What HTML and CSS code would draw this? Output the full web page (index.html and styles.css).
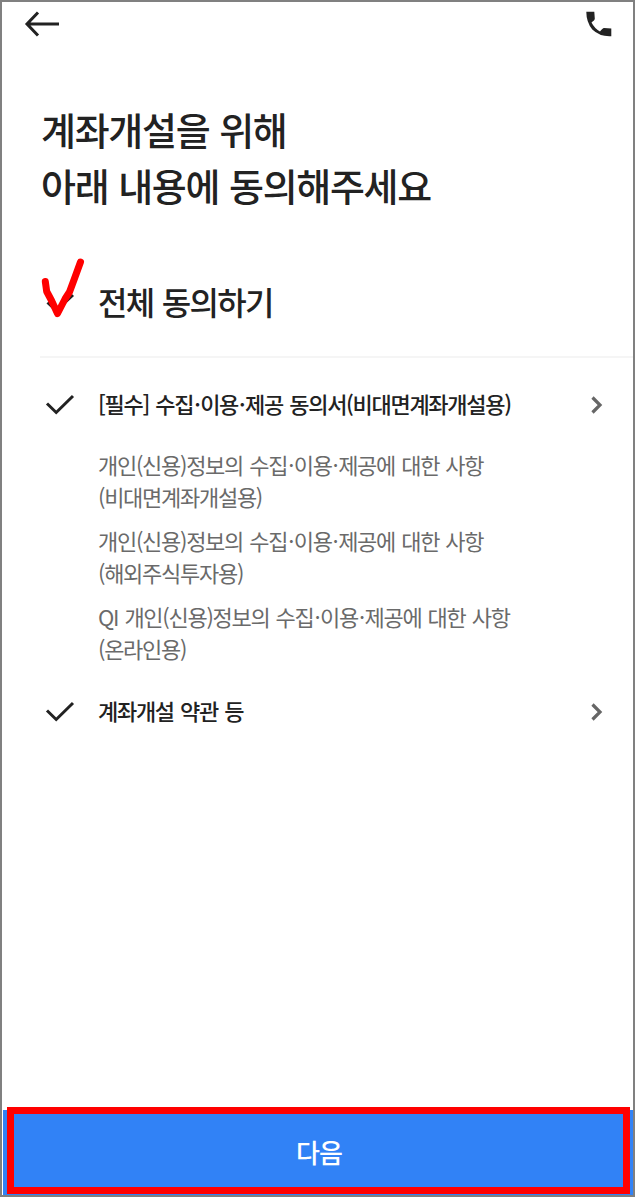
FILE: index.html
```html
<!DOCTYPE html>
<html lang="ko">
<head>
<meta charset="utf-8">
<title>계좌개설 동의</title>
<link rel="stylesheet" href="styles.css">
</head>
<body>
<div class="screen">
  <header class="topbar">
    <svg class="back" width="36" height="28" viewBox="0 0 36 28"><path d="M14 2.500 3 14l11 11.500M3 14H35" fill="none" stroke="#222" stroke-width="3"/></svg>
    <svg class="phone" width="26" height="26" viewBox="0 0 26 26"><path d="M0.300 0.700H8.300L8.800 7.800Q8.800 9.200 5.500 11.500Q8.600 17.500 14 20.500Q16.600 17 18 17L25.300 17.500V25.300Q14 26 6.300 18.600Q0.300 11 0.300 0.700Z" fill="#222"/></svg>
  </header>
  <main class="content">
    <h1 class="title">계좌개설을 위해<br>아래 내용에 동의해주세요</h1>
    <div class="all">
      <span class="all-mark">
        <svg class="check" width="30" height="22" viewBox="0 0 30 22"><path d="M2.500 12.500 11.200 20.500 28 5" fill="none" stroke="#222" stroke-width="3"/></svg>
        <svg class="pen" width="48" height="64" viewBox="0 0 48 64"><path d="M6.300 24.500 7.700 34.500 12.500 43.500 18.500 56.500 26 42 30.500 35 35.500 21.500 41.500 5" fill="none" stroke="#f00" stroke-width="7" stroke-linecap="round" stroke-linejoin="round"/></svg>
      </span>
      <span class="all-label">전체 동의하기</span>
    </div>
    <div class="row">
      <svg class="check" width="30" height="22" viewBox="0 0 30 22"><path d="M2 9.500 11.200 18.500 28 2" fill="none" stroke="#222" stroke-width="3"/></svg>
      <span class="row-label">[필수] 수집<span class="dot">·</span>이용<span class="dot">·</span>제공 동의서(비대면계좌개설용)</span>
      <svg class="chevron" width="14" height="20" viewBox="0 0 14 20"><path d="M2.500 2.500 10 10 2.500 17.500" fill="none" stroke="#666" stroke-width="3.200"/></svg>
    </div>
    <div class="details">
      <p class="detail">개인(신용)정보의 수집<span class="dot">·</span>이용<span class="dot">·</span>제공에 대한 사항<br>(비대면계좌개설용)</p>
      <p class="detail">개인(신용)정보의 수집<span class="dot">·</span>이용<span class="dot">·</span>제공에 대한 사항<br>(해외주식투자용)</p>
      <p class="detail">QI 개인(신용)정보의 수집<span class="dot">·</span>이용<span class="dot">·</span>제공에 대한 사항<br>(온라인용)</p>
    </div>
    <div class="row">
      <svg class="check" width="30" height="22" viewBox="0 0 30 22"><path d="M2 9.500 11.200 18.500 28 2" fill="none" stroke="#222" stroke-width="3"/></svg>
      <span class="row-label">계좌개설 약관 등</span>
      <svg class="chevron" width="14" height="20" viewBox="0 0 14 20"><path d="M2.500 2.500 10 10 2.500 17.500" fill="none" stroke="#666" stroke-width="3.200"/></svg>
    </div>
  </main>
  <footer class="bottom">
    <div class="next">다음</div>
    <div class="highlight"></div>
  </footer>
</div>
</body>
</html>
```

FILE: styles.css
```css
* { box-sizing: border-box; }
body { margin: 0; background: #fff; font-family: "Noto Sans CJK KR", sans-serif; color: #222; }
svg { display: block; flex: none; }
.screen { height: 1197px; border: 2px solid #808080; display: flex; flex-direction: column; overflow: hidden; }
.topbar { height: 44px; padding: 0 21px 0 22px; display: flex; justify-content: space-between; align-items: center; }
.content { flex: 1; padding: 55px 0 0 38px; }
.title { margin: 0; padding-left: 1px; font-size: 38px; line-height: 56px; font-weight: 500; letter-spacing: -1.3px; word-spacing: 0.5px; white-space: nowrap; }
.all { height: 145px; padding-top: 32px; border-bottom: 2px solid #f5f5f5; display: flex; align-items: center; }
.all-mark { width: 58px; padding-left: 5px; position: relative; }
.pen { position: absolute; left: -1px; top: -33px; }
.all-label { font-size: 32px; line-height: 48px; font-weight: 500; letter-spacing: -1.7px; word-spacing: 1px; }
.row { height: 93px; display: flex; align-items: center; padding: 0 29px 0 5px; }
.row-label { flex: 1; margin: -3px 0 0 23px; font-size: 22px; line-height: 32px; font-weight: 500; letter-spacing: -1.3px; word-spacing: 1.5px; white-space: nowrap; }
.dot { margin: 0 0.7px 0 1px; }
.details { margin-top: -3px; padding-left: 58px; height: 217px; }
.detail { margin: 0 0 12px; font-size: 22px; line-height: 32px; color: #6a6a6a; font-weight: 400; letter-spacing: -1.28px; word-spacing: 1.3px; white-space: nowrap; }
.bottom { height: 85px; padding: 0 0 0 1px; position: relative; }
.next { height: 85px; padding-left: 2px; background: #3182f6; color: #fff; font-size: 26px; line-height: 84px; font-weight: 500; text-align: center; letter-spacing: -1px; }
.highlight { position: absolute; left: 5px; right: 3px; top: -3px; bottom: 1px; border: 7px solid #f00; }
```
